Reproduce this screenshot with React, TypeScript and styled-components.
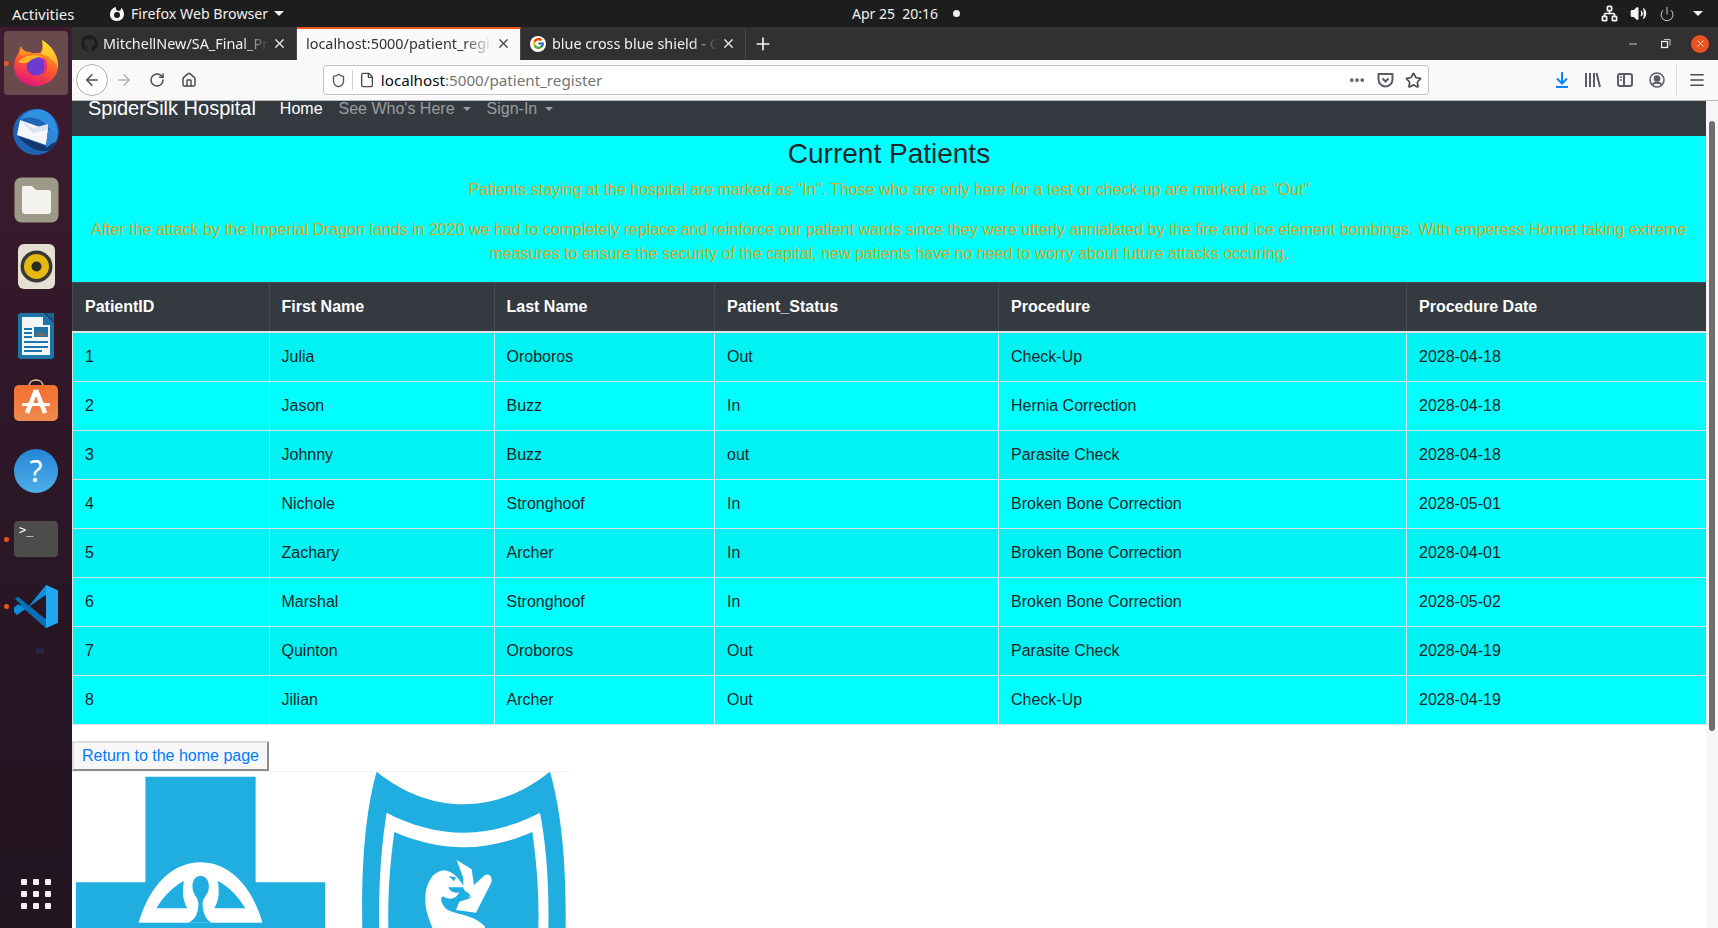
import { FC, ReactNode } from "react";
import styled, { createGlobalStyle } from "styled-components";
import { FcGoogle } from "react-icons/fc";
import { FaGithub } from "react-icons/fa";
import {
  ArrowLeft,
  ArrowRight,
  Ellipsis,
  File,
  House,
  Menu,
  Minus,
  Network,
  Plus,
  Power,
  RotateCw,
  Shield,
  Star,
  Volume2,
  X,
} from "lucide-react";

const UI_FONT = `"Noto Sans", "Open Sans", sans-serif`;
const PAGE_FONT = `"Liberation Sans", Arial, sans-serif`;

interface IPatient {
  id: number;
  first: string;
  last: string;
  status: string;
  procedure: string;
  date: string;
}

const patients: IPatient[] = [
  { id: 1, first: "Julia", last: "Oroboros", status: "Out", procedure: "Check-Up", date: "2028-04-18" },
  { id: 2, first: "Jason", last: "Buzz", status: "In", procedure: "Hernia Correction", date: "2028-04-18" },
  { id: 3, first: "Johnny", last: "Buzz", status: "out", procedure: "Parasite Check", date: "2028-04-18" },
  { id: 4, first: "Nichole", last: "Stronghoof", status: "In", procedure: "Broken Bone Correction", date: "2028-05-01" },
  { id: 5, first: "Zachary", last: "Archer", status: "In", procedure: "Broken Bone Correction", date: "2028-04-01" },
  { id: 6, first: "Marshal", last: "Stronghoof", status: "In", procedure: "Broken Bone Correction", date: "2028-05-02" },
  { id: 7, first: "Quinton", last: "Oroboros", status: "Out", procedure: "Parasite Check", date: "2028-04-19" },
  { id: 8, first: "Jilian", last: "Archer", status: "Out", procedure: "Check-Up", date: "2028-04-19" },
];

const columns = [
  { label: "PatientID", width: 196.5 },
  { label: "First Name", width: 225 },
  { label: "Last Name", width: 220.5 },
  { label: "Patient_Status", width: 284 },
  { label: "Procedure", width: 408 },
  { label: "Procedure Date", width: 300 },
];

const GlobalStyle = createGlobalStyle`
  html, body {
    margin: 0;
    height: 100%;
    overflow: hidden;
    background: #fff;
  }
  * {
    box-sizing: border-box;
  }
`;

const FirefoxLogo: FC = () => (
  <svg width="48" height="48" viewBox="0 0 48 48">
    <defs>
      <linearGradient id="ffBody" x1="0.75" y1="0" x2="0.35" y2="1">
        <stop offset="0" stopColor="#ffc21f" />
        <stop offset="0.55" stopColor="#ff5a2b" />
        <stop offset="1" stopColor="#e3147f" />
      </linearGradient>
      <linearGradient id="ffTop" x1="0.5" y1="0" x2="0.5" y2="1">
        <stop offset="0" stopColor="#ffe63a" />
        <stop offset="1" stopColor="#ffa41f" />
      </linearGradient>
    </defs>
    <path
      d="M9 10 C5 16 2 21 2 27 C2 39 12 47 24 47 C36 47 46 38 46 27 C46 18 40 8 30 1 C31 8 30 12 28 14 L13 14 Z"
      fill="url(#ffBody)"
    />
    <path d="M30 1 C40 7 47 17 46 29 C43 22 37 17 29 15 C32 11 32 6 30 1 Z" fill="url(#ffTop)" />
    <path d="M9 7 C11 12 14 13 20 13 C16 16 11 17 8 16 C7 13 7 10 9 7 Z" fill="#ff9125" />
    <circle cx="24" cy="27" r="9.5" fill="#6d3bd0" />
    <path d="M6 23 C11 17 22 14 31 18 C25 18 19 20 17 23 C13 25 9 24 6 23 Z" fill="#ffb426" />
    <path d="M32 19 C37 24 36 33 30 37 C33 31 33 25 30 19 Z" fill="#e8317a" />
  </svg>
);

const ThunderbirdLogo: FC = () => (
  <svg width="48" height="50" viewBox="0 0 48 50">
    <circle cx="24" cy="26" r="23" fill="#1f63b5" />
    <path d="M8 14 C14 2 30 0 38 8 C46 16 48 30 42 38 C42 26 34 14 22 12 C16 11 11 12 8 14 Z" fill="#2f8fe0" />
    <path d="M8 14 L36 24 L34 39 L5 29 Z" fill="#f5f7fb" />
    <path d="M8 14 L21 22 L36 18 L36 24 L21 27 Z" fill="#dde3ee" />
    <path d="M6 30 C14 40 24 46 34 45 C40 44 43 40 44 36 L34 40 Z" fill="#16366e" />
    <path d="M36 24 L44 26 L42 36 L34 42 Z" fill="#2e86d8" />
  </svg>
);

const FilesLogo: FC = () => (
  <svg width="45" height="46" viewBox="0 0 45 46">
    <rect x="0.5" y="0.5" width="44" height="45" rx="7" fill="#9f9a87" />
    <path
      d="M8 11 C8 9.5 9 9 10 9 L18 9 L22 13 L35 13 C36 13 37 14 37 15 L37 34 C37 36 36 37 34 37 L11 37 C9 37 8 36 8 34 Z"
      fill="#f4f2ec"
    />
  </svg>
);

const RhythmboxLogo: FC = () => (
  <svg width="37" height="45" viewBox="0 0 37 45">
    <rect width="37" height="45" rx="6" fill="#e5e0d3" />
    <circle cx="18.5" cy="22.5" r="16" fill="#3a3834" />
    <circle cx="18.5" cy="22.5" r="12.5" fill="#e6b90f" />
    <circle cx="18.5" cy="22.5" r="5" fill="#2a2926" />
  </svg>
);

const WriterLogo: FC = () => (
  <svg width="37" height="46" viewBox="0 0 37 46">
    <path d="M3 0 L26 0 L36 10 L36 43 C36 45 35 46 33 46 L3 46 C1 46 0 45 0 43 L0 3 C0 1 1 0 3 0 Z" fill="#1b75a8" />
    <path d="M4 4 L25 4 L25 12 L32 12 L32 42 L4 42 Z" fill="#f2f6f8" />
    <path d="M27 0 L36 0 L36 9 Z" fill="#17658f" />
    <rect x="6" y="15" width="8" height="2" fill="#1b75a8" />
    <rect x="6" y="19" width="8" height="2" fill="#1b75a8" />
    <rect x="6" y="23" width="8" height="2" fill="#1b75a8" />
    <rect x="6" y="28" width="24" height="2" fill="#1b75a8" />
    <rect x="6" y="33" width="24" height="2" fill="#1b75a8" />
    <rect x="6" y="37" width="18" height="2" fill="#1b75a8" />
    <rect x="16" y="14" width="14" height="10" fill="#1b75a8" />
    <path d="M17 23 L21 17 L24 21 L26 19 L29 23 Z" fill="#6a6a6a" />
  </svg>
);

const SoftwareLogo: FC = () => (
  <svg width="44" height="43" viewBox="0 0 44 43">
    <defs>
      <linearGradient id="bag" x1="0" y1="0" x2="0" y2="1">
        <stop offset="0" stopColor="#f4702f" />
        <stop offset="1" stopColor="#f08a4f" />
      </linearGradient>
    </defs>
    <path d="M15 7 C15 -1 29 -1 29 7" fill="none" stroke="#f2c9a0" strokeWidth="1.5" />
    <rect y="6" width="44" height="36" rx="5" fill="url(#bag)" />
    <path d="M22 11 L13 34 M22 11 L31 34" stroke="#fff" strokeWidth="4.5" />
    <rect x="8" y="24" width="28" height="3" rx="1.5" fill="#fff" />
  </svg>
);

const HelpLogo: FC = () => (
  <svg width="44" height="44" viewBox="0 0 44 44">
    <defs>
      <linearGradient id="help" x1="0" y1="0" x2="0" y2="1">
        <stop offset="0" stopColor="#2485d6" />
        <stop offset="1" stopColor="#4fb0ea" />
      </linearGradient>
    </defs>
    <circle cx="22" cy="22" r="22" fill="url(#help)" />
    <text x="22" y="33" fontSize="30" fill="#fff" textAnchor="middle" fontFamily="'Noto Sans', sans-serif">
      ?
    </text>
  </svg>
);

const TerminalLogo: FC = () => (
  <svg width="44" height="36" viewBox="0 0 44 36">
    <rect width="44" height="36" rx="4" fill="#4c4c4a" />
    <text x="5" y="13" fontSize="12" fill="#fff" fontFamily="'DejaVu Sans Mono', monospace">
      &gt;_
    </text>
  </svg>
);

const VSCodeLogo: FC = () => (
  <svg width="44" height="43" viewBox="0 0 44 40" preserveAspectRatio="none">
    <path d="M32 0 L44 5 L44 35 L32 40 L10 22 L3 27 L0 24 L8 17 L32 32 Z" fill="#0a78c4" />
    <path d="M32 0 L32 9 L9 24 L3 28 L0 25 L0 21 L4 18 L12 23 Z" fill="#0e8fdc" />
    <path d="M32 0 L44 5 L44 35 L32 40 Z" fill="#22a7f2" />
    <path d="M1 13 L4 11 L32 32 L32 40 Z" fill="#0b6fb5" />
  </svg>
);

const FoxSwirl: FC = () => (
  <svg width="16" height="16" viewBox="0 0 16 16">
    <path
      d="M7 1 C3 2 1 5 1 8.5 C1 12.5 4 15 8 15 C12 15 15 12 15 8 C15 5 13.5 3 12 1.5 C12.5 4 11 5 9.5 5 C7 4.5 6.5 3 7 1 Z"
      fill="#f5f5f5"
    />
    <circle cx="8" cy="9" r="3" fill="#1d1d1d" />
  </svg>
);

const DownloadIcon: FC = () => (
  <svg width="14" height="16" viewBox="0 0 14 16" fill="none" stroke="#0a84ff" strokeWidth="2">
    <path d="M7 0 V11 M2 6.5 L7 11.5 L12 6.5" />
    <path d="M1 15 H13" />
  </svg>
);

const PocketIcon: FC = () => (
  <svg width="17" height="16" viewBox="0 0 17 16" fill="none" stroke="#5b5b66" strokeWidth="2">
    <path d="M1.5 2 L15.5 2 L15.5 7.5 C15.5 11.5 12 14.5 8.5 14.5 C5 14.5 1.5 11.5 1.5 7.5 Z" />
    <path d="M5.5 6.5 L8.5 9.5 L11.5 6.5" />
  </svg>
);

const LibraryIcon: FC = () => (
  <svg width="16" height="16" viewBox="0 0 16 16" fill="none" stroke="#5b5b66" strokeWidth="2">
    <path d="M1 1 V15 M5 1 V15 M9 1 V15 M11.5 1 L15 15" />
  </svg>
);

const SidebarIcon: FC = () => (
  <svg width="16" height="16" viewBox="0 0 16 16" fill="none" stroke="#5b5b66" strokeWidth="2">
    <rect x="1" y="2" width="14" height="12" rx="2" />
    <path d="M7 2 V14" />
    <path d="M3 5 H5 M3 8 H5" strokeWidth="1.4" />
  </svg>
);

const AccountIcon: FC = () => (
  <svg width="16" height="16" viewBox="0 0 16 16" fill="none" stroke="#5b5b66" strokeWidth="1.5">
    <circle cx="8" cy="8" r="7" />
    <circle cx="8" cy="6.5" r="2.6" fill="#5b5b66" />
    <path d="M3.5 12.5 C5 10 11 10 12.5 12.5" strokeWidth="2" />
  </svg>
);

const RestoreIcon: FC = () => (
  <svg width="10" height="10" viewBox="0 0 10 10" fill="none" stroke="#f1f1f1">
    <rect x="0.5" y="2.5" width="6" height="6" strokeWidth="1.3" />
    <path d="M3 0.5 H9 V6.5" strokeWidth="0.8" />
  </svg>
);

// both logos traced from the reference, group transforms map crop coordinates
const InsuranceLogos: FC = () => (
  <svg width="499" height="157" viewBox="0 0 499 157">
    <g transform="translate(-12 -52) scale(0.3444 0.3333)" fill="#20ade0">
      <path d="M248 170 H568 V487 H770 V800 H46 V487 H248 Z" />
      <path d="M228 608 C262 490 330 427 408 427 C486 427 554 490 588 608 Z" fill="#fff" />
      <path d="M360 483 C320 505 298 535 280 565 H370 C355 540 355 510 360 483 Z" />
      <path d="M458 483 C498 505 520 535 538 565 H448 C463 540 463 510 458 483 Z" />
      <path d="M408 468 C390 468 383 485 385 505 C387 525 402 535 402 550 C402 575 395 600 372 608 H440 C422 600 414 575 414 550 C414 535 430 525 432 505 C434 485 426 468 408 468 Z" />
    </g>
    <g transform="translate(228 -2) scale(0.3333)">
      <path
        d="M230 5 C310 70 400 103 490 103 C580 103 670 70 750 5 C780 110 800 260 797 480 H187 C183 260 200 110 230 5 Z"
        fill="#20ade0"
      />
      <path
        d="M260 128 C330 165 410 188 490 188 C570 188 650 165 720 128 C738 220 748 340 745 480 H238 C235 340 245 220 260 128 Z"
        fill="#fff"
      />
      <path
        d="M283 186 C350 215 420 232 490 232 C560 232 630 215 697 186 C710 280 718 370 715 480 H265 C263 370 270 280 283 186 Z"
        fill="#20ade0"
      />
      <path
        d="M470 270 L515 298 L522 345 L555 315 C570 308 580 325 573 340 L528 428 L468 420 L478 395 L510 385 L490 355 L490 325 Z"
        fill="#fff"
      />
      <path
        d="M376 385 C378 330 405 298 440 302 C465 308 480 330 493 352 L445 352 C450 365 465 372 478 366 C470 385 450 392 432 380 C420 375 420 400 440 418 C465 435 520 432 555 470 L555 480 L400 480 C385 445 375 415 376 385 Z"
        fill="#fff"
      />
      <path d="M446 318 L468 322 L462 334 Z" fill="#20ade0" />
      <path d="M478 366 C495 360 510 368 514 385 C505 375 492 370 478 372 Z" fill="#20ade0" />
    </g>
  </svg>
);

interface DockItemProps {
  height: number;
  active?: boolean;
  running?: boolean;
  children: ReactNode;
}

const DockItem: FC<DockItemProps> = ({ height, active, running, children }) => (
  <DockSlot $height={height}>
    {active && <ActiveBox />}
    {running && <RunDot />}
    <DockIcon>{children}</DockIcon>
  </DockSlot>
);

const App: FC = () => {
  return (
    <Screen>
      <GlobalStyle />
      <TopBar>
        <TopLeft>
          <Activities>Activities</Activities>
          <AppMenu>
            <FoxSwirl />
            <AppName>Firefox Web Browser</AppName>
            <TopCaret $color="#f1f1f1" $size={5} />
          </AppMenu>
        </TopLeft>
        <Clock>Apr 25&nbsp;&nbsp;20:16</Clock>
        <ClockDot />
        <TopRight>
          <Network size={17} color="#f5f5f5" strokeWidth={2.4} />
          <Volume2 size={17} color="#f5f5f5" fill="#f5f5f5" />
          <Power size={16} color="#d8d8d8" strokeWidth={1.4} />
          <TopCaret $color="#f1f1f1" $size={5} />
        </TopRight>
      </TopBar>

      <Desktop>
        <Dock>
          <DockItem height={64} active running>
            <FirefoxLogo />
          </DockItem>
          <DockItem height={72}>
            <ThunderbirdLogo />
          </DockItem>
          <DockItem height={65}>
            <FilesLogo />
          </DockItem>
          <DockItem height={69}>
            <RhythmboxLogo />
          </DockItem>
          <DockItem height={69}>
            <WriterLogo />
          </DockItem>
          <DockItem height={60}>
            <SoftwareLogo />
          </DockItem>
          <DockItem height={82}>
            <HelpLogo />
          </DockItem>
          <DockItem height={54} running>
            <TerminalLogo />
          </DockItem>
          <DockItem height={81} running>
            <VSCodeLogo />
          </DockItem>
          <MoreDots />
          <AppGrid>
            {Array.from({ length: 9 }).map((_, i) => (
              <GridDot key={i} />
            ))}
          </AppGrid>
        </Dock>

        <Browser>
          <TabBar>
            <Tab>
              <TabIcon>
                <FaGithub size={17} color="#1c1c1c" />
              </TabIcon>
              <TabTitle>MitchellNew/SA_Final_Project</TabTitle>
              <X size={15} color="#eee" />
            </Tab>
            <Tab $active>
              <TabTitle>localhost:5000/patient_register</TabTitle>
              <X size={15} color="#444" />
            </Tab>
            <Tab>
              <TabIcon>
                <GoogleBadge>
                  <FcGoogle size={13} />
                </GoogleBadge>
              </TabIcon>
              <TabTitle>blue cross blue shield - Google Search</TabTitle>
              <X size={15} color="#eee" />
            </Tab>
            <NewTab>
              <Plus size={20} color="#f1f1f1" />
            </NewTab>
            <WindowControls>
              <Minus size={12} color="#f1f1f1" strokeWidth={1.6} />
              <RestoreIcon />
              <CloseButton>
                <X size={11} color="#fff" strokeWidth={2} />
              </CloseButton>
            </WindowControls>
          </TabBar>

          <Toolbar>
            <BackButton>
              <ArrowLeft size={18} color="#4a4a4f" strokeWidth={2} />
            </BackButton>
            <NavIcon>
              <ArrowRight size={18} color="#b4b4b6" strokeWidth={2} />
            </NavIcon>
            <NavIcon>
              <RotateCw size={16} color="#4a4a4f" strokeWidth={2.2} />
            </NavIcon>
            <NavIcon>
              <House size={16} color="#4a4a4f" strokeWidth={2.2} />
            </NavIcon>
            <UrlBar>
              <UrlLead>
                <Shield size={15} color="#5b5b66" strokeWidth={2.2} />
              </UrlLead>
              <File size={16} color="#4a4a4f" strokeWidth={2} />
              <UrlText>
                <UrlHost>localhost</UrlHost>:5000/patient_register
              </UrlText>
              <UrlActions>
                <Ellipsis size={18} color="#5b5b66" strokeWidth={3} />
                <PocketIcon />
                <Star size={17} color="#4a4a4f" strokeWidth={2.4} />
              </UrlActions>
            </UrlBar>
            <ToolIcons>
              <DownloadIcon />
              <LibraryIcon />
              <SidebarIcon />
              <AccountIcon />
              <ToolDivider />
              <Menu size={18} color="#4a4a4f" strokeWidth={2.2} />
            </ToolIcons>
          </Toolbar>

          <Viewport>
            <Page>
              <Navbar>
                <Brand>SpiderSilk Hospital</Brand>
                <NavLink $active>Home</NavLink>
                <NavLink>
                  See Who's Here
                  <Caret $color="rgba(255,255,255,0.5)" $size={4.8} />
                </NavLink>
                <NavLink>
                  Sign-In
                  <Caret $color="rgba(255,255,255,0.5)" $size={4.8} />
                </NavLink>
              </Navbar>

              <Hero>
                <Heading>Current Patients</Heading>
                <Blurb>
                  Patients staying at the hospital are marked as "In". Those who are only here for a test or check-up
                  are marked as "Out"
                </Blurb>
                <Blurb>
                  After the attack by the Imperial Dragon lands in 2020 we had to completely replace and reinforce our
                  patient wards since they were utterly annialated by the fire and ice element bombings. With emperess
                  Hornet taking extreme measures to ensure the security of the capital, new patients have no need to
                  worry about future attacks occuring.
                </Blurb>
              </Hero>

              <Table>
                <colgroup>
                  {columns.map((c) => (
                    <Col key={c.label} $width={c.width} />
                  ))}
                </colgroup>
                <thead>
                  <tr>
                    {columns.map((c) => (
                      <HeadCell key={c.label}>{c.label}</HeadCell>
                    ))}
                  </tr>
                </thead>
                <tbody>
                  {patients.map((p) => (
                    <Row key={p.id} $striped={p.id % 2 === 1}>
                      <Cell>{p.id}</Cell>
                      <Cell>{p.first}</Cell>
                      <Cell>{p.last}</Cell>
                      <Cell>{p.status}</Cell>
                      <Cell>{p.procedure}</Cell>
                      <Cell>{p.date}</Cell>
                    </Row>
                  ))}
                </tbody>
              </Table>

              <HomeButton>Return to the home page</HomeButton>
              <LogoStrip>
                <InsuranceLogos />
              </LogoStrip>
            </Page>
            <Scrollbar>
              <Thumb />
            </Scrollbar>
          </Viewport>
        </Browser>
      </Desktop>
    </Screen>
  );
};

const Screen = styled.div`
  display: flex;
  flex-direction: column;
  width: 1718px;
  height: 928px;
  overflow: hidden;
  font-family: ${UI_FONT};
`;

const TopBar = styled.div`
  display: flex;
  align-items: center;
  height: 27px;
  flex-shrink: 0;
  background: #1d1d1d;
  color: #f1f1f1;
  font-size: 14px;
`;

const TopLeft = styled.div`
  display: flex;
  align-items: center;
  width: 852px;
  padding-left: 12px;
`;

const Activities = styled.span`
  width: 97px;
  font-size: 15px;
`;

const AppMenu = styled.span`
  display: flex;
  align-items: center;
`;

const AppName = styled.span`
  margin: 0 0 0 6px;
  font-size: 14.2px;
`;

const Clock = styled.span`
  width: 101px;
`;

const ClockDot = styled.span`
  width: 7px;
  height: 7px;
  border-radius: 50%;
  background: #f1f1f1;
`;

const TopRight = styled.div`
  display: flex;
  align-items: center;
  gap: 12px;
  margin-left: auto;
  padding-right: 15px;
`;

const Caret = styled.span<{ $color: string; $size: number }>`
  display: inline-block;
  margin-left: 8px;
  border-top: ${(p) => p.$size}px solid ${(p) => p.$color};
  border-left: ${(p) => p.$size}px solid transparent;
  border-right: ${(p) => p.$size}px solid transparent;
`;

const TopCaret = styled(Caret)`
  margin-left: 6px;
`;

const Desktop = styled.div`
  display: flex;
  flex: 1;
  min-height: 0;
`;

const Dock = styled.div`
  position: relative;
  display: flex;
  flex-direction: column;
  align-items: stretch;
  width: 72px;
  flex-shrink: 0;
  padding-top: 4px;
  background: linear-gradient(180deg, #401b30 0%, #2c1726 50%, #21141f 100%);
`;

const DockSlot = styled.div<{ $height: number }>`
  position: relative;
  display: flex;
  align-items: center;
  justify-content: center;
  height: ${(p) => p.$height}px;
  flex-shrink: 0;
`;

const DockIcon = styled.div`
  position: relative;
  display: flex;
`;

const ActiveBox = styled.div`
  position: absolute;
  left: 4px;
  top: 0;
  width: 64px;
  height: 64px;
  border-radius: 4px;
  background: #694a4d;
`;

const RunDot = styled.span`
  position: absolute;
  left: 4px;
  top: calc(50% - 2.5px);
  width: 5px;
  height: 5px;
  border-radius: 50%;
  background: #e95420;
`;

const MoreDots = styled.div`
  align-self: center;
  width: 8px;
  height: 5px;
  margin: 1px 0 0 8px;
  border-radius: 1px;
  background: #2a2547;
`;

const AppGrid = styled.div`
  display: grid;
  grid-template-columns: repeat(3, 6px);
  gap: 6px;
  justify-content: center;
  margin-top: auto;
  margin-bottom: 19px;
`;

const GridDot = styled.span`
  width: 6px;
  height: 6px;
  border-radius: 1px;
  background: #f2f0f1;
`;

const Browser = styled.div`
  display: flex;
  flex-direction: column;
  flex: 1;
  min-width: 0;
`;

const TabBar = styled.div`
  display: flex;
  height: 33px;
  flex-shrink: 0;
  background: #323031;
`;

const Tab = styled.div<{ $active?: boolean }>`
  display: flex;
  align-items: center;
  width: ${(p) => (p.$active ? 224 : 225)}px;
  padding: 0 9px 2px 9px;
  font-size: 14.4px;
  color: ${(p) => (p.$active ? "#333" : "#f1f1f1")};
  background: ${(p) => (p.$active ? "#f9f9fa" : "transparent")};
  border-top: 2px solid ${(p) => (p.$active ? "#e95420" : "transparent")};
  border-right: 1px solid #4a4a4a;
`;

const TabIcon = styled.span`
  display: flex;
  flex-shrink: 0;
  align-items: center;
  width: 22px;
`;

const GoogleBadge = styled.span`
  display: flex;
  align-items: center;
  justify-content: center;
  width: 16px;
  height: 16px;
  border-radius: 50%;
  background: #fff;
`;

const TabTitle = styled.span`
  flex: 1;
  min-width: 0;
  margin-right: 3px;
  overflow: hidden;
  white-space: nowrap;
  -webkit-mask-image: linear-gradient(90deg, #000 84%, transparent 100%);
  mask-image: linear-gradient(90deg, #000 84%, transparent 100%);
`;

const NewTab = styled.div`
  display: flex;
  align-items: center;
  justify-content: center;
  width: 34px;
`;

const WindowControls = styled.div`
  display: flex;
  align-items: center;
  gap: 22px;
  margin-left: auto;
  padding-right: 9px;
`;

const CloseButton = styled.span`
  display: flex;
  align-items: center;
  justify-content: center;
  width: 18px;
  height: 18px;
  margin-left: -2px;
  border-radius: 50%;
  background: #e95420;
`;

const Toolbar = styled.div`
  display: flex;
  align-items: center;
  height: 41px;
  flex-shrink: 0;
  padding-left: 4px;
  background: #f9f9fa;
  border-bottom: 1px solid #b8b8b8;
`;

const BackButton = styled.span`
  display: flex;
  align-items: center;
  justify-content: center;
  width: 32px;
  height: 32px;
  border: 1px solid #b0b0b0;
  border-radius: 50%;
  background: #fff;
`;

const NavIcon = styled.span`
  display: flex;
  align-items: center;
  justify-content: center;
  width: 32.6px;
`;

const UrlBar = styled.div`
  display: flex;
  align-items: center;
  width: 1106px;
  height: 30px;
  margin-left: 117px;
  padding: 0 6px 0 7px;
  border: 1px solid #c4c4c4;
  border-radius: 4px;
  background: #fff;
`;

const UrlLead = styled.span`
  display: flex;
  align-items: center;
  width: 22px;
  height: 20px;
  margin-right: 6px;
  border-right: 1px solid #d0d0d0;
`;

const UrlText = styled.span`
  margin-left: 6px;
  font-size: 15.2px;
  color: #737373;
`;

const UrlHost = styled.span`
  color: #0c0c0d;
`;

const UrlActions = styled.span`
  display: flex;
  align-items: center;
  gap: 11px;
  margin-left: auto;
`;

const ToolIcons = styled.div`
  display: flex;
  align-items: center;
  gap: 16px;
  margin-left: 126px;
`;

const ToolDivider = styled.span`
  width: 1px;
  height: 32px;
  margin: 0 -5px 0 -5px;
  background: #dcdcdc;
`;

const Viewport = styled.div`
  display: flex;
  flex: 1;
  min-height: 0;
`;

const Page = styled.div`
  flex: 1;
  min-width: 0;
  overflow: hidden;
  background: #fff;
  font-family: ${PAGE_FONT};
  font-size: 16px;
  line-height: 24px;
  color: #212529;
`;

const Navbar = styled.nav`
  display: flex;
  align-items: flex-start;
  height: 35px;
  padding-left: 16px;
  background: #343a40;
`;

const Brand = styled.span`
  margin-right: 16px;
  font-size: 20px;
  line-height: 14px;
  color: #fff;
`;

const NavLink = styled.span<{ $active?: boolean }>`
  display: flex;
  align-items: center;
  height: 16px;
  padding: 0 8px;
  color: ${(p) => (p.$active ? "#fff" : "rgba(255, 255, 255, 0.5)")};
`;

const Hero = styled.div`
  height: 146px;
  background: #00ffff;
  text-align: center;
`;

const Heading = styled.h1`
  margin: 0 0 7px;
  padding-top: 1px;
  font-size: 28px;
  font-weight: 400;
  line-height: 33.6px;
`;

const Blurb = styled.p`
  margin: 0 0 16px;
  color: goldenrod;
`;

const Table = styled.table`
  width: 1634px;
  table-layout: fixed;
  border-collapse: collapse;
  margin-bottom: 16px;
`;

const Col = styled.col<{ $width: number }>`
  width: ${(p) => p.$width}px;
`;

const HeadCell = styled.th`
  height: 49px;
  padding: 12px;
  text-align: left;
  font-weight: 700;
  color: #fff;
  background: #343a40;
  border: 1px solid #454d55;
  border-bottom: 2px solid #dee2e6;
`;

const Row = styled.tr<{ $striped: boolean }>`
  background: ${(p) => (p.$striped ? "#00f2f2" : "#00ffff")};
`;

const Cell = styled.td`
  height: 49px;
  padding: 12px;
  border: 1px solid #dee2e6;
`;

const HomeButton = styled.button`
  display: block;
  height: 30px;
  width: 197px;
  padding: 0;
  font-family: ${PAGE_FONT};
  font-size: 16px;
  color: #007bff;
  background: #f7f7f7;
  border: 2px solid;
  border-color: #dcdcdc #8c8c8c #8c8c8c #dcdcdc;
`;

const LogoStrip = styled.div`
  display: flex;
  width: 499px;
  border-top: 1px solid #f2f2f2;
`;

const Scrollbar = styled.div`
  position: relative;
  width: 12px;
  flex-shrink: 0;
  background: #f6f6f6;
`;

const Thumb = styled.div`
  position: absolute;
  left: 3px;
  top: 20px;
  width: 6px;
  height: 610px;
  border-radius: 3px;
  background: #6e6e6e;
`;

export default App;
